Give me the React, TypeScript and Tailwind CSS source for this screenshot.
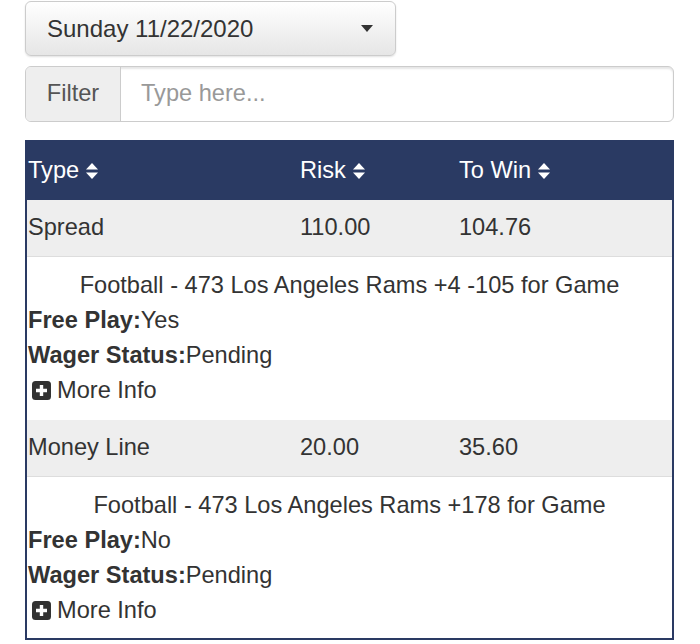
import React from 'react';

type Wager = {
  type: string;
  risk: string;
  toWin: string;
  description: string;
  freePlay: string;
  status: string;
};

const wagers: Wager[] = [
  {
    type: 'Spread',
    risk: '110.00',
    toWin: '104.76',
    description: 'Football - 473 Los Angeles Rams +4 -105 for Game',
    freePlay: 'Yes',
    status: 'Pending',
  },
  {
    type: 'Money Line',
    risk: '20.00',
    toWin: '35.60',
    description: 'Football - 473 Los Angeles Rams +178 for Game',
    freePlay: 'No',
    status: 'Pending',
  },
];

const SortIcon = () => (
  <svg width="14" height="18" viewBox="0 0 14 18" className="ml-[6px] inline-block">
    <path d="M7 1 L13 7.5 H1 Z" fill="currentColor" />
    <path d="M7 17 L13 10.5 H1 Z" fill="currentColor" />
  </svg>
);

const PlusSquare = () => (
  <svg width="19" height="19" viewBox="0 0 19 19" className="mr-[6px]">
    <rect x="0" y="0" width="19" height="19" rx="3.5" fill="#333" />
    <path d="M9.5 4 V15 M4 9.5 H15" stroke="#fff" strokeWidth="3.4" />
  </svg>
);

const cols = 'grid grid-cols-[272px_159px_1fr]';

export default function App() {
  return (
    <div className="w-[700px] h-[644px] bg-white text-[#333] font-['Liberation_Sans',Arial,sans-serif] text-[23.6px]">
      <div className="pl-[25px] pr-[26px] pt-[1px]">
        {/* Date dropdown */}
        <button className="w-[371px] h-[55px] flex items-center justify-between pl-[21px] pr-[22px] rounded-[6px] border border-[#ccc] bg-gradient-to-b from-white to-[#e6e6e6] shadow-[0_1px_2px_rgba(0,0,0,0.12)] text-[#333] text-[24px]">
          <span>Sunday 11/22/2020</span>
          <svg width="12" height="7" viewBox="0 0 12 7">
            <path d="M0 0 H12 L6 7 Z" fill="#333" />
          </svg>
        </button>

        {/* Filter */}
        <div className="mt-[10px] flex h-[56px] rounded-[6px] border border-[#ccc] overflow-hidden shadow-[inset_0_2px_2px_rgba(0,0,0,0.1)]">
          <div className="w-[95px] shrink-0 flex items-center justify-center bg-[#eee] border-r border-[#ccc] text-[#555]">
            Filter
          </div>
          <div className="flex-1 flex items-center pl-[20px] text-[#999]">Type here...</div>
        </div>

        {/* Wagers table */}
        <div className="mt-[18px] border-2 border-[#2a3a63]">
          <div className={`${cols} h-[58px] items-center bg-[#2a3a63] text-white`}>
            <div className="pl-[1px] flex items-center">Type<SortIcon /></div>
            <div className="pl-[1px] flex items-center">Risk<SortIcon /></div>
            <div className="pl-[1px] flex items-center">To Win<SortIcon /></div>
          </div>
          {wagers.map((w, i) => (
            <div key={i}>
              <div className={`${cols} h-[57px] items-center bg-[#eee] border-b border-[#ddd]`}>
                <div className="pl-[1px]">{w.type}</div>
                <div className="pl-[1px]">{w.risk}</div>
                <div className="pl-[1px]">{w.toWin}</div>
              </div>
              <div className={`pt-[11px] leading-[35px] ${i === 0 ? 'pb-[12px]' : 'pb-[10px]'}`}>
                <div className="text-center">{w.description}</div>
                <div className="pl-[1px]"><b>Free Play:</b>{w.freePlay}</div>
                <div className="pl-[1px]"><b>Wager Status:</b>{w.status}</div>
                <div className="pl-[5px] flex items-center"><PlusSquare />More Info</div>
              </div>
            </div>
          ))}
        </div>
      </div>
    </div>
  );
}
